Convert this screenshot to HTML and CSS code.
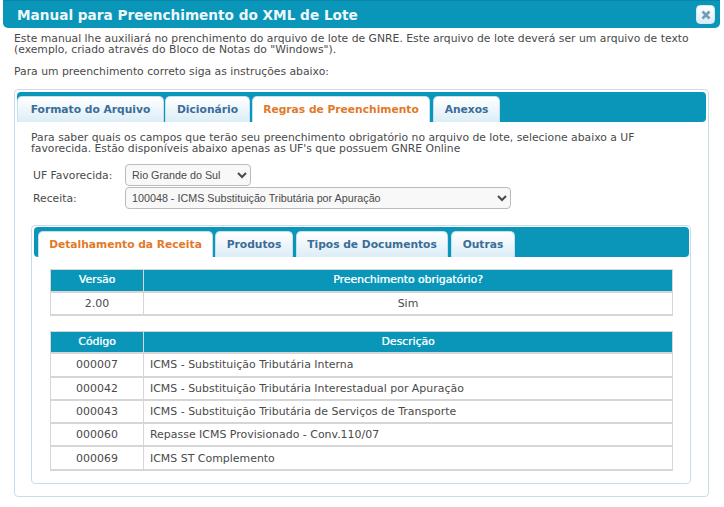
FILE: index.html
```html
<!DOCTYPE html>
<html lang="pt-BR">
<head>
<meta charset="utf-8">
<title>Manual para Preenchimento do XML de Lote</title>
<link rel="stylesheet" href="styles.css">
</head>
<body>
<div class="dialog">
  <header class="titlebar">
    <h1 class="title">Manual para Preenchimento do XML de Lote</h1>
    <button class="close" type="button" aria-label="Fechar">
      <svg width="10" height="10" viewBox="0 0 10 10"><path d="M1.5 1.5L8.5 8.5M8.5 1.5L1.5 8.5" stroke="#6f9cb8" stroke-width="2.6" fill="none"/></svg>
    </button>
  </header>
  <div class="content">
    <p class="intro">Este manual lhe auxiliará no prenchimento do arquivo de lote de GNRE. Este arquivo de lote deverá ser um arquivo de texto<br>(exemplo, criado através do Bloco de Notas do "Windows").</p>
    <p class="intro second">Para um preenchimento correto siga as instruções abaixo:</p>
    <section class="panel outer">
      <nav class="tabbar">
        <a class="tab t1">Formato do Arquivo</a>
        <a class="tab t2">Dicionário</a>
        <a class="tab t3 active">Regras de Preenchimento</a>
        <a class="tab t4">Anexos</a>
      </nav>
      <div class="outer-body">
        <p class="help">Para saber quais os campos que terão seu preenchimento obrigatório no arquivo de lote, selecione abaixo a UF<br>favorecida. Estão disponíveis abaixo apenas as UF's que possuem GNRE Online</p>
        <div class="field first">
          <label class="lbl">UF Favorecida:</label>
          <select class="sel uf"><option>Rio Grande do Sul</option></select>
        </div>
        <div class="field">
          <label class="lbl">Receita:</label>
          <select class="sel rec"><option>100048 - ICMS Substituição Tributária por Apuração</option></select>
        </div>
        <section class="panel inner">
          <nav class="tabbar small">
            <a class="tab i1 active">Detalhamento da Receita</a>
            <a class="tab i2">Produtos</a>
            <a class="tab i3">Tipos de Documentos</a>
            <a class="tab i4">Outras</a>
          </nav>
          <div class="inner-body">
            <table class="grid">
              <thead><tr><th class="c1">Versão</th><th>Preenchimento obrigatório?</th></tr></thead>
              <tbody><tr><td class="ctr">2.00</td><td class="ctr">Sim</td></tr></tbody>
            </table>
            <table class="grid">
              <thead><tr><th class="c1">Código</th><th>Descrição</th></tr></thead>
              <tbody>
                <tr><td class="ctr">000007</td><td>ICMS - Substituição Tributária Interna</td></tr>
                <tr><td class="ctr">000042</td><td>ICMS - Substituição Tributária Interestadual por Apuração</td></tr>
                <tr><td class="ctr">000043</td><td>ICMS - Substituição Tributária de Serviços de Transporte</td></tr>
                <tr><td class="ctr">000060</td><td>Repasse ICMS Provisionado - Conv.110/07</td></tr>
                <tr><td class="ctr">000069</td><td>ICMS ST Complemento</td></tr>
              </tbody>
            </table>
          </div>
        </section>
      </div>
    </section>
  </div>
</div>
</body>
</html>
```
FILE: styles.css
```css
* { box-sizing: border-box; }
html, body { margin: 0; padding: 0; background: #fff; }
body { width: 724px; height: 507px; overflow: hidden; font-family: "DejaVu Sans", Verdana, sans-serif; font-size: 10.8px; color: #4a4a4a; }
.dialog { padding: 0 4px 0 3px; }
.titlebar { height: 28px; background: #0a96b9; border-top: 1px solid #0b86ab; border-radius: 0 0 5px 5px; display: flex; align-items: center; justify-content: space-between; padding: 0 5px 0 14px; }
.title { margin: 0; font-size: 13.65px; font-weight: bold; color: #eef8fb; line-height: 26px; }
.close { width: 19px; height: 19px; padding: 0; border: 1px solid #d4e8f2; border-radius: 4px; background: linear-gradient(#fff, #dcecf6); display: flex; align-items: center; justify-content: center; }
.content { padding: 5px 11px 0 11px; }
.intro { margin: 0; font-size: 10.8px; line-height: 12px; color: #4a4a4a; }
.intro:first-child { line-height: 11px; padding-bottom: 1px; }
.second { margin-top: 10px; }
.panel { border: 1px solid #c9dde8; border-radius: 4px; background: #fff; }
.outer { margin-top: 11px; height: 408px; padding: 2px; }
.tabbar { display: flex; align-items: flex-end; background: #0a96b9; border-radius: 4px; height: 30px; }
.tab { display: flex; align-items: center; justify-content: center; height: 26px; font-weight: bold; font-size: 10.7px; color: #3a6d99; background: linear-gradient(#fff, #dcedf7); border: 1px solid #c3dff0; border-bottom: 0; border-radius: 5px 5px 0 0; }
.tab.active { background: #fff; color: #e2792a; }
.t1 { width: 147px; margin-right: 1px; }
.t2 { width: 85px; margin-right: 2px; }
.t3 { width: 178px; margin-right: 3px; }
.t4 { width: 67px; }
.outer-body { padding: 10px 15px 0 14px; }
.help { margin: 0; font-size: 10.8px; line-height: 11px; color: #4a4a4a; }
.field { display: flex; align-items: center; margin-top: 1px; }
.field.first { margin-top: 10px; }
.lbl { width: 94px; padding-left: 2px; font-size: 10.8px; color: #4a4a4a; }
.sel { height: 22px; font-family: "Liberation Sans", Arial, sans-serif; font-size: 10.75px; color: #4a4a4a; background: #f8f8f8; border: 1px solid #bbb; border-radius: 4px; padding: 0 2px; }
.uf { width: 126px; }
.rec { width: 386px; }
.inner { margin-top: 16px; height: 259px; padding: 1px 1px 0 2px; }
.small { padding-left: 4px; }
.i1 { width: 175px; margin-right: 2px; }
.i2 { width: 78px; margin-right: 3px; }
.i3 { width: 152px; margin-right: 3px; }
.i4 { width: 64px; }
.inner-body { padding: 12px 15px 0 16px; }
.grid { width: 623px; border-collapse: collapse; table-layout: fixed; margin-bottom: 15px; border: 1px solid #d6d6d6; }
.grid th { height: 22px; padding: 0 0 2px; background: #0a96b9; color: #eef8fb; font-size: 10.8px; font-weight: normal; text-shadow: 0.35px 0 0 #eef8fb; text-align: center; border: 1px solid #d6d6d6; }
.grid td { height: 23.3px; padding: 0 6px; font-size: 10.95px; color: #4a4a4a; background: #fff; border: 2px solid #d6d6d6; border-left-width: 1px; border-right-width: 1px; }
.c1 { width: 93px; }
.grid .ctr { text-align: center; }
```
